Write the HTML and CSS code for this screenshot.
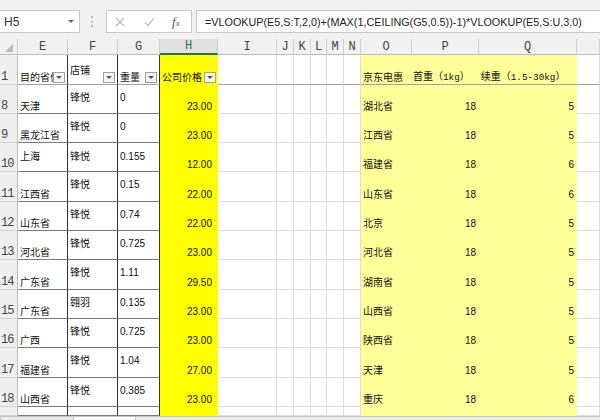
FILE: index.html
```html
<!DOCTYPE html>
<html lang="zh">
<head>
<meta charset="utf-8">
<title>Sheet</title>
<link rel="stylesheet" href="styles.css">
</head>
<body>
<div class="toolbar">
  <div class="namebox"><span>H5</span><span class="caret"></span></div>
  <div class="dots"></div>
  <div class="fxbox">
    <svg class="ico-x" width="10" height="10" viewBox="0 0 10 10"><path d="M1 1 L9 9 M9 1 L1 9" stroke="#b8b8b8" stroke-width="1.2" fill="none"/></svg>
    <svg class="ico-ok" width="11" height="10" viewBox="0 0 11 10"><path d="M1 5.5 L4 8.5 L10 1" stroke="#b8b8b8" stroke-width="1.2" fill="none"/></svg>
    <span class="fx">f<small>x</small></span>
  </div>
  <div class="formula">=VLOOKUP(E5,S:T,2,0)+(MAX(1,CEILING(G5,0.5))-1)*VLOOKUP(E5,S:U,3,0)</div>
</div>

<div class="sheet">
  <div class="colhead">
    <div class="ch corner"><span class="tri"></span></div>
    <div class="ch">E</div><div class="ch">F</div><div class="ch">G</div>
    <div class="ch sel">H</div><div class="ch">I</div><div class="ch">J</div>
    <div class="ch">K</div><div class="ch">L</div><div class="ch">M</div>
    <div class="ch">N</div><div class="ch">O</div><div class="ch">P</div>
    <div class="ch">Q</div><div class="ch"></div>
  </div>

  <div class="row r1">
    <div class="c rh">1</div>
    <div class="c e bot hd">目的省份<span class="filt"></span></div>
    <div class="c f hd up">店铺<span class="filt"></span></div>
    <div class="c g bot hd">重量<span class="filt"></span></div>
    <div class="c h bot hd">公司价格<span class="filt"></span></div>
    <div class="c"></div><div class="c"></div><div class="c"></div><div class="c"></div><div class="c"></div><div class="c"></div>
    <div class="c o bot wide"><span class="seg">京东电惠</span><span class="seg s2">首重（<span class="mono">1kg</span>）</span><span class="seg s3">续重（<span class="mono">1.5-30kg</span>）</span></div>
    <div class="c"></div>
  </div>

  <div class="row">
    <div class="c rh">8</div><div class="c e bot">天津</div><div class="c f top">锋悦</div><div class="c g top">0</div><div class="c h bot num">23.00</div>
    <div class="c"></div><div class="c"></div><div class="c"></div><div class="c"></div><div class="c"></div><div class="c"></div>
    <div class="c o bot">湖北省</div><div class="c p bot num">18</div><div class="c q bot num">5</div><div class="c"></div>
  </div>
  <div class="row">
    <div class="c rh">9</div><div class="c e bot">黑龙江省</div><div class="c f top">锋悦</div><div class="c g top">0</div><div class="c h bot num">23.00</div>
    <div class="c"></div><div class="c"></div><div class="c"></div><div class="c"></div><div class="c"></div><div class="c"></div>
    <div class="c o bot">江西省</div><div class="c p bot num">18</div><div class="c q bot num">5</div><div class="c"></div>
  </div>
  <div class="row">
    <div class="c rh">10</div><div class="c e mid">上海</div><div class="c f mid">锋悦</div><div class="c g mid">0.155</div><div class="c h bot num">12.00</div>
    <div class="c"></div><div class="c"></div><div class="c"></div><div class="c"></div><div class="c"></div><div class="c"></div>
    <div class="c o bot">福建省</div><div class="c p bot num">18</div><div class="c q bot num">6</div><div class="c"></div>
  </div>
  <div class="row r30">
    <div class="c rh">11</div><div class="c e bot">江西省</div><div class="c f top">锋悦</div><div class="c g top">0.15</div><div class="c h bot num">22.00</div>
    <div class="c"></div><div class="c"></div><div class="c"></div><div class="c"></div><div class="c"></div><div class="c"></div>
    <div class="c o bot">山东省</div><div class="c p bot num">18</div><div class="c q bot num">6</div><div class="c"></div>
  </div>
  <div class="row">
    <div class="c rh">12</div><div class="c e bot">山东省</div><div class="c f top">锋悦</div><div class="c g top">0.74</div><div class="c h bot num">22.00</div>
    <div class="c"></div><div class="c"></div><div class="c"></div><div class="c"></div><div class="c"></div><div class="c"></div>
    <div class="c o bot">北京</div><div class="c p bot num">18</div><div class="c q bot num">5</div><div class="c"></div>
  </div>
  <div class="row">
    <div class="c rh">13</div><div class="c e bot">河北省</div><div class="c f top">锋悦</div><div class="c g top">0.725</div><div class="c h bot num">23.00</div>
    <div class="c"></div><div class="c"></div><div class="c"></div><div class="c"></div><div class="c"></div><div class="c"></div>
    <div class="c o bot">河北省</div><div class="c p bot num">18</div><div class="c q bot num">5</div><div class="c"></div>
  </div>
  <div class="row r30">
    <div class="c rh">14</div><div class="c e bot">广东省</div><div class="c f top">锋悦</div><div class="c g top">1.11</div><div class="c h bot num">29.50</div>
    <div class="c"></div><div class="c"></div><div class="c"></div><div class="c"></div><div class="c"></div><div class="c"></div>
    <div class="c o bot">湖南省</div><div class="c p bot num">18</div><div class="c q bot num">5</div><div class="c"></div>
  </div>
  <div class="row">
    <div class="c rh">15</div><div class="c e bot">广东省</div><div class="c f top">翱羽</div><div class="c g top">0.135</div><div class="c h bot num">23.00</div>
    <div class="c"></div><div class="c"></div><div class="c"></div><div class="c"></div><div class="c"></div><div class="c"></div>
    <div class="c o bot">山西省</div><div class="c p bot num">18</div><div class="c q bot num">5</div><div class="c"></div>
  </div>
  <div class="row">
    <div class="c rh">16</div><div class="c e bot">广西</div><div class="c f top">锋悦</div><div class="c g top">0.725</div><div class="c h bot num">23.00</div>
    <div class="c"></div><div class="c"></div><div class="c"></div><div class="c"></div><div class="c"></div><div class="c"></div>
    <div class="c o bot">陕西省</div><div class="c p bot num">18</div><div class="c q bot num">5</div><div class="c"></div>
  </div>
  <div class="row r30">
    <div class="c rh">17</div><div class="c e bot">福建省</div><div class="c f top">锋悦</div><div class="c g top">1.04</div><div class="c h bot num">27.00</div>
    <div class="c"></div><div class="c"></div><div class="c"></div><div class="c"></div><div class="c"></div><div class="c"></div>
    <div class="c o bot">天津</div><div class="c p bot num">18</div><div class="c q bot num">5</div><div class="c"></div>
  </div>
  <div class="row">
    <div class="c rh">18</div><div class="c e bot">山西省</div><div class="c f top">锋悦</div><div class="c g top">0.385</div><div class="c h bot num">23.00</div>
    <div class="c"></div><div class="c"></div><div class="c"></div><div class="c"></div><div class="c"></div><div class="c"></div>
    <div class="c o bot">重庆</div><div class="c p bot num">18</div><div class="c q bot num">6</div><div class="c"></div>
  </div>
  <div class="row r19">
    <div class="c rh"></div><div class="c e"></div><div class="c f"></div><div class="c g"></div><div class="c h"></div>
    <div class="c"></div><div class="c"></div><div class="c"></div><div class="c"></div><div class="c"></div><div class="c"></div>
    <div class="c o"></div><div class="c p"></div><div class="c q"></div><div class="c"></div>
  </div>
</div>

<div class="tabbar">
  <div class="tb-a"></div>
  <div class="tb-b"></div>
  <div class="tb-c"></div>
</div>
</body>
</html>
```

FILE: styles.css
```css
* { box-sizing: border-box; }
html, body { margin: 0; padding: 0; }
body {
  width: 600px;
  height: 420px;
  overflow: hidden;
  background: #fff;
  font-family: "Liberation Sans", "Noto Sans CJK SC", sans-serif;
  font-size: 10px;
  color: #111;
}

/* ---------- formula bar ---------- */
.toolbar {
  height: 39px;
  background: #f1f1f1;
  display: flex;
  align-items: flex-start;
  padding-top: 10px;
}
.namebox {
  width: 80px;
  height: 23px;
  background: #fff;
  border: 1px solid #c8c8c8;
  border-left: none;
  display: flex;
  align-items: center;
  justify-content: space-between;
  padding: 0 5px 0 4px;
  font-size: 12px;
  color: #333;
}
.caret {
  width: 0; height: 0;
  border-left: 3px solid transparent;
  border-right: 3px solid transparent;
  border-top: 3px solid #666;
}
.dots {
  margin: 6px 0 0 11px;
  width: 2px;
  height: 11px;
  border-left: 2px dotted #bcbcbc;
}
.fxbox {
  margin-left: 13px;
  width: 86px;
  height: 23px;
  background: #fff;
  border: 1px solid #c8c8c8;
  display: flex;
  align-items: center;
  padding-left: 8px;
}
.ico-x { margin-right: 19px; }
.ico-ok { margin-right: 17px; }
.fx {
  font-family: "Liberation Serif", serif;
  font-style: italic;
  font-size: 13px;
  color: #555;
}
.fx small { font-size: 9px; }
.formula {
  margin-left: 4px;
  flex: 1;
  height: 23px;
  background: #fff;
  border: 1px solid #c8c8c8;
  border-right: none;
  display: flex;
  align-items: center;
  padding-left: 8px;
  font-size: 10.8px;
  color: #222;
  white-space: nowrap;
  overflow: hidden;
}

/* ---------- grid ---------- */
.sheet {
  --cols: 18px 50px 50px 42px 58px 59px 17px 17px 16px 17px 17px 51px 67px 98px 23px;
}
.colhead, .row {
  display: grid;
  grid-template-columns: var(--cols);
}
.colhead { height: 16px; }
.ch {
  background: #f1f1f1;
  border-right: 1px solid #cfcfcf;
  border-bottom: 1px solid #bdbdbd;
  font-family: "Liberation Mono", monospace;
  font-size: 12px;
  line-height: 12px;
  color: #444;
  display: flex;
  justify-content: center;
  align-items: center;
}
.ch.sel {
  background: #e0e0e0;
  color: #217346;
  border-bottom: 2px solid #217346;
}
.corner {
  justify-content: flex-end;
  align-items: flex-end;
  padding: 0 4px 2px 0;
}
.tri {
  width: 0; height: 0;
  border-left: 8px solid transparent;
  border-bottom: 8px solid #b9b9b9;
}

.row { height: 29px; }
.row.r30, .row.r1 { height: 30px; }
.row.r19 { height: 9px; }

.c {
  position: relative;
  display: flex;
  overflow: hidden;
  white-space: nowrap;
  line-height: 12px;
  border-right: 1px solid #dcdcdc;
  border-bottom: 1px solid #dcdcdc;
  padding: 0 2px;
}
.rh {
  background: #efefef;
  border-right: 1px solid #bdbdbd;
  border-bottom: 1px solid #d2d2d2;
  font-family: "Liberation Mono", monospace;
  font-size: 12px;
  color: #444;
  align-items: flex-end;
  padding: 0 0 1px 1px;
  letter-spacing: -1px;
}
.e, .f, .g { border-bottom-color: #7c7c7c; border-right-color: #333; }
.h { background: #ffff00; border-right-color: #ffff00; border-bottom-color: #ffff00; }
.o, .p, .q { background: #ffff99; border-right-color: #ffff99; border-bottom-color: #ffff99; }

.r1 .c { border-bottom-color: #a2a2a2; }
.r1 .rh { border-bottom-color: #d2d2d2; }
.r1 .h { border-bottom-color: #ffff00; }
.wide { grid-column: span 3; overflow: visible; font-size: 10px; }
.seg { display: inline-block; }
.s2 { margin-left: 10px; }
.s3 { margin-left: 11px; }
.mono { font-family: "Liberation Mono", monospace; font-size: 9.3px; }

.bot { align-items: flex-end; }
.top { align-items: flex-start; padding-top: 7px; }
.mid { align-items: center; }
.up { align-items: flex-start; padding-top: 10px; }
.num { justify-content: flex-end; }
.h.num { padding-right: 5px; }

.filt {
  position: absolute;
  right: 2px;
  bottom: 1px;
  width: 12px;
  height: 11px;
  background: #f3f3f3;
  border: 1px solid #a0a0a0;
}
.filt::after {
  content: "";
  position: absolute;
  left: 2px;
  top: 3px;
  border-left: 3px solid transparent;
  border-right: 3px solid transparent;
  border-top: 3px solid #555;
}
.h .filt { right: 1px; }

/* ---------- bottom tab bar ---------- */
.tabbar {
  height: 20px;
  display: flex;
  background: #f0f0f0;
  border-top: 1px solid #c6c6c6;
}
.tb-a { width: 74px; background: #e8e8e8; border: 1px solid #c6c6c6; border-top: none; }
.tb-b { width: 61px; background: #fff; }
.tb-c { flex: 1; background: #ececec; border-left: 1px solid #c6c6c6; }
```
